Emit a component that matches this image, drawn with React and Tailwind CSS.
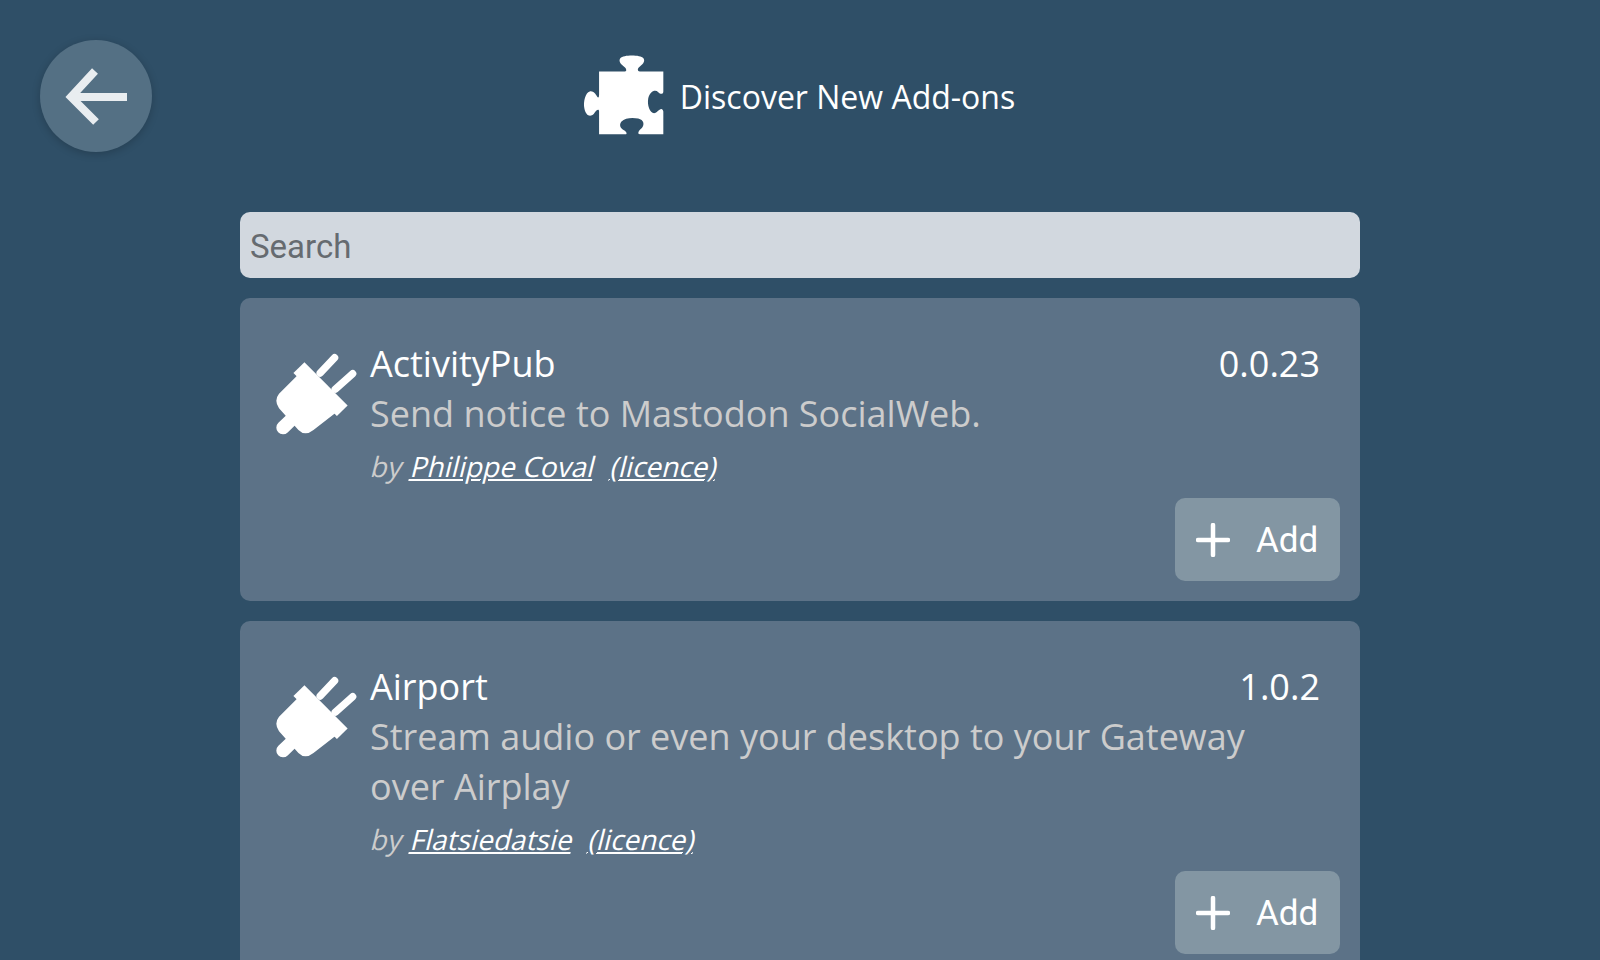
const puzzle = "M88 95 H165 C172 95 170 85 162 80 C150 72 146 62 152 55 C160 45 212 45 220 55 C226 62 222 72 210 80 C202 85 202 95 210 95 H280 V155 C280 163 272 165 265 157 C255 148 240 155 235 175 C230 200 245 232 262 215 C272 205 278 205 280 215 V283 H210 C202 283 205 272 215 265 C225 255 222 240 205 236 C190 232 165 233 155 245 C145 258 155 268 165 272 C172 278 172 283 165 283 H88 V215 C88 205 80 210 72 222 C62 232 48 228 44 205 C40 185 48 158 60 155 C70 152 78 162 82 170 C86 176 88 172 88 165 Z";

function Plug() {
  return (
    <svg viewBox="30 40 245 245" className="w-[82px] h-[82px] shrink-0 mt-[14px]">
      <path d="M118 68 L247 197 L215 228 L85 100 Z" fill="#fff" />
      <path d="M98 106 L42 162 Q26 182 42 205 L100 270 Q120 290 145 270 L220 212 Z" fill="#fff" />
      <path d="M165 100 L208 54 M210 148 L262 102" stroke="#fff" strokeWidth="22" strokeLinecap="round" fill="none" />
      <path d="M54 263 L80 238" stroke="#fff" strokeWidth="40" strokeLinecap="round" fill="none" />
    </svg>
  );
}

function Card({ name, version, desc, author }) {
  return (
    <div className="bg-[#5c7287] rounded-[10px] p-5 mb-5">
      <div className="flex pl-[15px] pt-[21px] pr-5 gap-[13px]">
        <Plug />
        <div className="flex-1 min-w-0">
          <div className="flex justify-between text-[36px] leading-[50px] text-white">
            <span>{name}</span>
            <span>{version}</span>
          </div>
          <div className="text-[36px] leading-[50px] text-[#cccccc] pr-2">{desc}</div>
          <div className="text-[28px] leading-[50px] text-[#cccccc] mt-[2px] pl-[2px] flex">
            <span className="inline-block -skew-x-[14deg] mr-[2px]">by&nbsp;</span>
            <a className="inline-block -skew-x-[14deg] text-white underline">{author}</a>
            <a className="inline-block -skew-x-[14deg] text-white underline ml-[16px]">(licence)</a>
          </div>
        </div>
      </div>
      <div className="flex justify-end mt-[7px]">
        <button className="flex items-center h-[83px] w-[165px] pl-[21px] rounded-[10px] bg-[#8396a3] text-white text-[35px] gap-[26px] font-['Roboto',sans-serif]">
          <svg viewBox="0 0 34 34" className="w-[34px] h-[34px]">
            <path d="M17 2 V32 M2 17 H32" stroke="#fff" strokeWidth="4.5" strokeLinecap="round" />
          </svg>
          <span className="pt-[4px]">Add</span>
        </button>
      </div>
    </div>
  );
}

export default function App() {
  return (
    <div className="h-[960px] overflow-hidden bg-[#2f4f67] font-['Open_Sans',sans-serif]">
      <header className="grid grid-cols-[1fr_auto_1fr] h-[212px]">
        <div className="pl-10 pt-10">
          <button className="flex w-28 h-28 items-center justify-center rounded-full bg-[#547084] shadow-[0_2px_8px_rgba(0,0,0,0.2)]">
            <svg viewBox="0 0 112 112" className="w-28 h-28">
              <path d="M55 31 L31 57 L56 82 M33 57 H87" stroke="#e9edf0" strokeWidth="8" fill="none" />
            </svg>
          </button>
        </div>
        <div className="flex items-start pt-[53px] pr-[2px] gap-[15px]">
          <svg viewBox="40 40 245 248" className="w-[82px] h-[83px]">
            <path d={puzzle} fill="#fff" />
          </svg>
          <h1 className="text-[32px] leading-[44px] text-white mt-[22px]">Discover New Add-ons</h1>
        </div>
        <div />
      </header>
      <main className="w-[1120px] mx-auto">
        <input
          placeholder="Search"
          className="block w-full h-[66px] px-[10px] pt-[2px] mb-5 rounded-[10px] bg-[#d2d8df] text-[33px] font-['Roboto',sans-serif] outline-none placeholder:text-[#666b70]"
        />
        <Card name="ActivityPub" version="0.0.23" desc="Send notice to Mastodon SocialWeb." author="Philippe Coval" />
        <Card name="Airport" version="1.0.2" desc="Stream audio or even your desktop to your Gateway over Airplay" author="Flatsiedatsie" />
      </main>
    </div>
  );
}
